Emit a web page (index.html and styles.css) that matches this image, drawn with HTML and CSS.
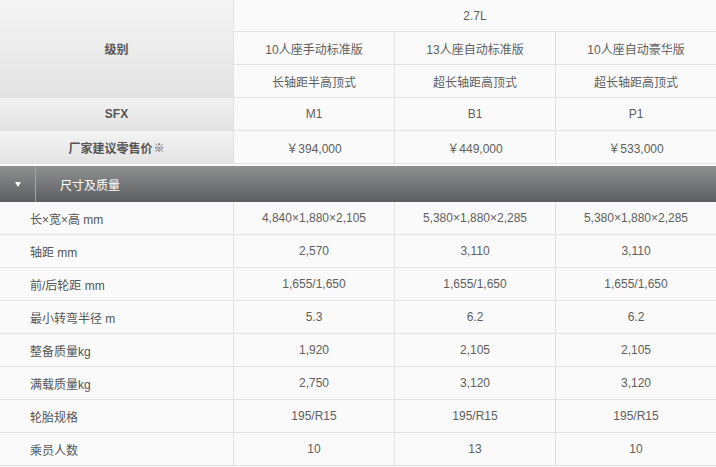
FILE: index.html
```html
<!DOCTYPE html>
<html lang="zh">
<head>
<meta charset="utf-8">
<link rel="stylesheet" href="styles.css">
</head>
<body>
<div class="spec">
  <div class="grid top">
    <div class="hd grade">级别</div>
    <div class="cell span3">2.7L</div>
    <div class="cell">10人座手动标准版</div>
    <div class="cell">13人座自动标准版</div>
    <div class="cell">10人座自动豪华版</div>
    <div class="cell">长轴距半高顶式</div>
    <div class="cell">超长轴距高顶式</div>
    <div class="cell">超长轴距高顶式</div>
    <div class="hd">SFX</div>
    <div class="cell">M1</div>
    <div class="cell">B1</div>
    <div class="cell">P1</div>
    <div class="hd">厂家建议零售价<span class="mark">※</span></div>
    <div class="cell">￥394,000</div>
    <div class="cell">￥449,000</div>
    <div class="cell">￥533,000</div>
  </div>
  <div class="section">
    <div class="toggle"><span class="tri"></span></div>
    <div class="title">尺寸及质量</div>
  </div>
  <div class="grid body">
    <div class="lbl">长×宽×高 mm</div><div class="cell">4,840×1,880×2,105</div><div class="cell">5,380×1,880×2,285</div><div class="cell">5,380×1,880×2,285</div>
    <div class="lbl">轴距 mm</div><div class="cell">2,570</div><div class="cell">3,110</div><div class="cell">3,110</div>
    <div class="lbl">前/后轮距 mm</div><div class="cell">1,655/1,650</div><div class="cell">1,655/1,650</div><div class="cell">1,655/1,650</div>
    <div class="lbl">最小转弯半径 m</div><div class="cell">5.3</div><div class="cell">6.2</div><div class="cell">6.2</div>
    <div class="lbl">整备质量kg</div><div class="cell">1,920</div><div class="cell">2,105</div><div class="cell">2,105</div>
    <div class="lbl">满载质量kg</div><div class="cell">2,750</div><div class="cell">3,120</div><div class="cell">3,120</div>
    <div class="lbl">轮胎规格</div><div class="cell">195/R15</div><div class="cell">195/R15</div><div class="cell">195/R15</div>
    <div class="lbl">乘员人数</div><div class="cell">10</div><div class="cell">13</div><div class="cell">10</div>
  </div>
</div>
</body>
</html>
```

FILE: styles.css
```css
html, body {
  margin: 0;
  padding: 0;
  background: #fafafa;
}
body {
  font-family: "Liberation Sans", "Noto Sans CJK SC", sans-serif;
  font-size: 12px;
  color: #5a5a5a;
}
.spec {
  width: 716px;
}
.grid {
  display: grid;
  grid-template-columns: 233px 160px 160px 160px;
  gap: 1px;
  background: #e1e1e1;
  border-bottom: 1px solid #e1e1e1;
}
.top {
  grid-template-rows: 31px 32px 32px 32px 32px;
}
.body {
  grid-auto-rows: 32px;
}
.cell {
  background: #fafafa;
  display: flex;
  align-items: center;
  justify-content: center;
  color: #5e5e5e;
}
.span3 {
  grid-column: 2 / 5;
}
.hd {
  background: linear-gradient(#f3f3f3, #e3e3e3);
  display: flex;
  align-items: center;
  justify-content: center;
  font-weight: bold;
  color: #555;
}
.grade {
  grid-row: 1 / 4;
  background: linear-gradient(#f5f5f5, #e2e2e2);
}
.mark {
  font-size: 11px;
  font-weight: bold;
  color: #555;
  margin-left: 1px;
}
.section {
  margin-top: 2px;
  height: 36px;
  display: flex;
  background: linear-gradient(#909090, #5b5e61);
  color: #fff;
}
.toggle {
  width: 35px;
  border-right: 1px solid #a4a4a4;
  display: flex;
  align-items: center;
  justify-content: center;
}
.tri {
  width: 0;
  height: 0;
  border-left: 3.5px solid transparent;
  border-right: 3.5px solid transparent;
  border-top: 5px solid #fff;
  margin-left: 1px;
}
.title {
  display: flex;
  align-items: center;
  padding-left: 24px;
  font-size: 12px;
}
.lbl {
  background: #fafafa;
  display: flex;
  align-items: center;
  padding-left: 30px;
  color: #555;
}
```
